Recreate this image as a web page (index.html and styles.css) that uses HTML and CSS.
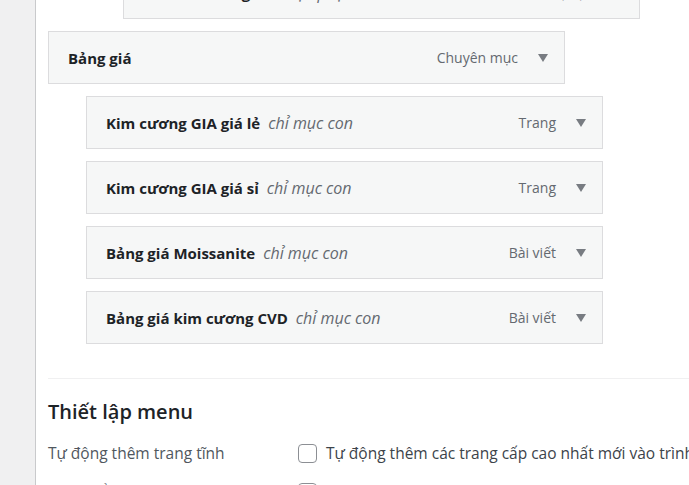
FILE: index.html
```html
<!DOCTYPE html>
<html lang="vi">
<head>
<meta charset="utf-8">
<title>Menu</title>
<link rel="stylesheet" href="styles.css">
</head>
<body>
<div class="layout">
  <aside class="sidebar"></aside>
  <main class="main">
    <ul class="menu-list">
      <li class="menu-item depth-2 top-cut">
        <div class="handle">
          <span class="title"><span class="name">Tin kim cương</span><span class="sub">chỉ mục phụ</span></span>
          <span class="controls"><span class="type">Liên kết tự tạo</span><span class="arrow"></span></span>
        </div>
      </li>
      <li class="menu-item depth-0">
        <div class="handle">
          <span class="title"><span class="name">Bảng giá</span></span>
          <span class="controls"><span class="type">Chuyên mục</span><span class="arrow"></span></span>
        </div>
      </li>
      <li class="menu-item depth-1">
        <div class="handle">
          <span class="title"><span class="name">Kim cương GIA giá lẻ</span><span class="sub">chỉ mục con</span></span>
          <span class="controls"><span class="type">Trang</span><span class="arrow"></span></span>
        </div>
      </li>
      <li class="menu-item depth-1">
        <div class="handle">
          <span class="title"><span class="name">Kim cương GIA giá sỉ</span><span class="sub">chỉ mục con</span></span>
          <span class="controls"><span class="type">Trang</span><span class="arrow"></span></span>
        </div>
      </li>
      <li class="menu-item depth-1">
        <div class="handle">
          <span class="title"><span class="name">Bảng giá Moissanite</span><span class="sub">chỉ mục con</span></span>
          <span class="controls"><span class="type">Bài viết</span><span class="arrow"></span></span>
        </div>
      </li>
      <li class="menu-item depth-1">
        <div class="handle">
          <span class="title"><span class="name">Bảng giá kim cương CVD</span><span class="sub">chỉ mục con</span></span>
          <span class="controls"><span class="type">Bài viết</span><span class="arrow"></span></span>
        </div>
      </li>
    </ul>

    <section class="settings">
      <h3 class="settings-title">Thiết lập menu</h3>
      <div class="settings-row">
        <div class="settings-label">Tự động thêm trang tĩnh</div>
        <label class="check"><span class="box"></span><span class="check-text">Tự động thêm các trang cấp cao nhất mới vào trình đơn này</span></label>
      </div>
      <div class="settings-row">
        <div class="settings-label">Vị trí hiển thị</div>
        <label class="check"><span class="box"></span><span class="check-text">Menu chính</span></label>
      </div>
    </section>
  </main>
</div>
</body>
</html>
```

FILE: styles.css
```css
html, body {
  margin: 0;
  padding: 0;
  background: #ffffff;
  overflow: hidden;
}
body {
  font-family: "Open Sans", "Noto Sans", sans-serif;
  color: #1d2327;
  font-size: 14px;
}
.layout {
  display: flex;
  height: 485px;
  width: 100%;
  overflow: hidden;
}
.sidebar {
  width: 35px;
  flex: none;
  background: #f0f0f1;
  border-right: 1px solid #c9cacc;
}
.main {
  flex: 1;
  padding-left: 12px;
  min-width: 0;
  overflow: hidden;
}
.menu-list {
  list-style: none;
  margin: -34px 0 0 0;
  padding: 0;
}
.menu-item {
  width: 517px;
  margin-bottom: 12px;
}
.depth-1 { margin-left: 38px; }
.depth-2 { margin-left: 75px; }
.handle {
  box-sizing: border-box;
  height: 53px;
  border: 1px solid #dcdcde;
  background: #f6f7f7;
  display: flex;
  align-items: center;
  justify-content: space-between;
  padding: 0 16px 0 19px;
}
.title {
  display: flex;
  align-items: baseline;
  white-space: nowrap;
}
.name {
  font-size: 15px;
  font-weight: 700;
  color: #1d2327;
}
.sub {
  font-size: 16px;
  font-style: italic;
  color: #646970;
  margin-left: 8px;
}
.controls {
  display: flex;
  align-items: center;
}
.type {
  color: #646970;
}
.arrow {
  width: 0;
  height: 0;
  border-left: 5px solid transparent;
  border-right: 5px solid transparent;
  border-top: 8px solid #787c82;
  margin-left: 20px;
}
.settings {
  margin-top: 34px;
  border-top: 1px solid #f0f0f1;
}
.settings-title {
  font-size: 20px;
  font-weight: 600;
  margin: 19px 0 17px;
  color: #1d2327;
}
.settings-row {
  display: flex;
  align-items: center;
  margin-bottom: 17px;
  font-size: 15.5px;
}
.settings-label {
  width: 250px;
  color: #50575e;
  flex: none;
}
.check {
  display: flex;
  align-items: center;
  white-space: nowrap;
}
.box {
  box-sizing: border-box;
  width: 19px;
  height: 19px;
  border: 1px solid #8c8f94;
  border-radius: 4px;
  background: #fff;
  margin-right: 9px;
  flex: none;
}
.check-text {
  color: #3c434a;
}
```
